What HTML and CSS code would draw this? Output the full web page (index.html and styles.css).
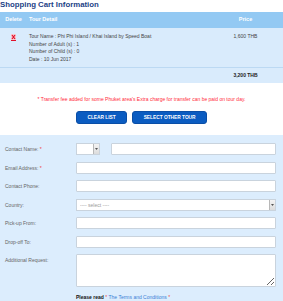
FILE: index.html
```html
<!DOCTYPE html>
<html lang="en">

<head>
    <meta charset="UTF-8">
    <meta name="viewport" content="width=device-width, initial-scale=1.0">
    <title>Shopping Cart</title>
    <link rel="stylesheet" href="styles.css">
</head>

<body>
    <h2 class="page-title">Shopping Cart Information</h2>

    <!-- Cart Table -->
    <table class="cart">
        <thead>
            <tr>
                <th class="col-del">Delete</th>
                <th class="col-detail">Tour Detail</th>
                <th class="col-price">Price</th>
            </tr>
        </thead>
        <tbody>
            <tr class="item">
                <td class="col-del">
                    <svg class="del-icon" width="5" height="7" viewBox="0 0 5 7">
                        <rect x="0" y="0" width="5" height="6" fill="#f6c9d0" />
                        <path d="M1 1 L4 5 M4 1 L1 5" stroke="#e0102a" stroke-width="1.2" />
                        <rect x="0" y="6" width="5" height="1" fill="#e0102a" />
                    </svg>
                </td>
                <td class="col-detail">
                    Tour Name : Phi Phi Island / Khai Island by Speed Boat<br>
                    Number of Adult (s) : 1<br>
                    Number of Child (s) : 0<br>
                    Date : 10 Jun 2017
                </td>
                <td class="col-price">1,600 THB</td>
            </tr>
            <tr class="total">
                <td></td>
                <td></td>
                <td class="col-price">3,200 THB</td>
            </tr>
        </tbody>
    </table>

    <p class="note">* Transfer fee added for some Phuket area's Extra charge for transfer can be paid on tour day.</p>

    <div class="actions">
        <button type="button" class="btn">CLEAR LIST</button>
        <button type="button" class="btn">SELECT OTHER TOUR</button>
    </div>

    <!-- Contact Form -->
    <form class="contact-form">
        <div class="form-row">
            <label>Contact Name: <span class="req">*</span></label>
            <div class="field-group">
                <div class="select-box small">
                    <select></select>
                    <span class="arrow"><svg width="3" height="2" viewBox="0 0 3 2"><path d="M0 0 H3 L1.5 2 Z" fill="#555" /></svg></span>
                </div>
                <input type="text" class="form-control">
            </div>
        </div>

        <div class="form-row">
            <label>Email Address: <span class="req">*</span></label>
            <input type="text" class="form-control">
        </div>

        <div class="form-row">
            <label>Contact Phone:</label>
            <input type="text" class="form-control">
        </div>

        <div class="form-row">
            <label>Country:</label>
            <div class="select-box wide">
                <select>
                    <option>---- select ----</option>
                </select>
                <span class="arrow"><svg width="3" height="2" viewBox="0 0 3 2"><path d="M0 0 H3 L1.5 2 Z" fill="#555" /></svg></span>
            </div>
        </div>

        <div class="form-row">
            <label>Pick-up From:</label>
            <input type="text" class="form-control">
        </div>

        <div class="form-row">
            <label>Drop-off To:</label>
            <input type="text" class="form-control">
        </div>

        <div class="form-row">
            <label>Additional Request:</label>
            <textarea class="form-control area"></textarea>
        </div>

        <p class="terms"><b>Please read</b> <span class="req">*</span> <a href="#">The Terms and Conditions</a> <span class="req">*</span></p>
    </form>
</body>

</html>
```

FILE: styles.css
```css
body {
    font-family: 'Liberation Sans', Arial, sans-serif;
    margin: 0;
    padding: 0;
    background-color: #fff;
}

.page-title {
    margin: 0 0 3px 0;
    font-size: 7.8px;
    line-height: 9px;
    font-weight: bold;
    color: #1c3f86;
}

.cart {
    width: 100%;
    border-collapse: collapse;
    font-size: 5px;
    line-height: 7.5px;
    color: #444;
}

.cart th {
    background-color: #93c9f3;
    color: #fff;
    font-weight: bold;
    font-size: 5.5px;
    height: 16px;
    padding: 0;
}

.cart td {
    padding: 0;
    vertical-align: top;
}

.col-del {
    width: 27px;
    text-align: center;
}

.col-detail {
    text-align: left;
    padding-left: 2px !important;
}

.col-price {
    width: 75px;
    text-align: center;
}

.item td {
    background-color: #d9ebfc;
    padding-top: 5px;
    padding-bottom: 4px;
    border-bottom: 1px solid #bcd9f3;
}

.del-icon {
    display: block;
    margin: 1px auto 0;
}

.total td {
    background-color: #d9ebfc;
    height: 15px;
    vertical-align: middle;
    font-weight: bold;
    color: #222;
}

.note {
    margin: 12.5px 0 0 0;
    font-size: 5px;
    line-height: 7px;
    text-align: center;
    color: #ff2b3b;
}

.actions {
    display: flex;
    justify-content: center;
    gap: 5px;
    margin-top: 8.5px;
}

.btn {
    background-color: #0b5cc1;
    color: #fff;
    border: 1px solid #0a4ea6;
    border-radius: 3px;
    height: 13px;
    padding: 0 10.5px;
    font-family: 'Liberation Sans', Arial, sans-serif;
    font-size: 4.8px;
    font-weight: bold;
    line-height: 11px;
    cursor: pointer;
}

.btn:hover {
    background-color: #094da3;
}

.contact-form {
    margin-top: 11px;
    background-color: #dcedfd;
    padding: 8px 7px 3px 5px;
    font-size: 5px;
    color: #666;
}

.form-row {
    display: flex;
    align-items: flex-start;
    margin-bottom: 6.5px;
}

.form-row label {
    width: 71px;
    flex-shrink: 0;
    line-height: 12px;
}

.req {
    color: #f03c3c;
}

.field-group {
    flex: 1;
    display: flex;
    gap: 11px;
}

.form-control {
    flex: 1;
    min-width: 0;
    height: 12px;
    margin: 0;
    padding: 0 3px;
    border: 1px solid #c9d3dd;
    border-radius: 1px;
    background-color: #fff;
    box-sizing: border-box;
    font-size: 5px;
}

.area {
    height: 33px;
    resize: vertical;
}

.select-box {
    display: flex;
    height: 12px;
    border: 1px solid #c9d3dd;
    background-color: #fff;
    box-sizing: border-box;
}

.select-box.small {
    width: 24px;
    flex-shrink: 0;
}

.select-box.wide {
    flex: 1;
}

.select-box select {
    flex: 1;
    min-width: 0;
    border: none;
    background: transparent;
    appearance: none;
    -webkit-appearance: none;
    padding: 0 3px;
    font-family: 'Liberation Sans', Arial, sans-serif;
    font-size: 5px;
    color: #999;
    outline: none;
}

.select-box .arrow {
    width: 5px;
    display: flex;
    align-items: center;
    justify-content: center;
    background: linear-gradient(#f4f4f4, #dcdcdc);
    border-left: 1px solid #b8b8b8;
}

.terms {
    margin: 0 0 0 71px;
    font-size: 5px;
    line-height: 7px;
    color: #111;
}

.terms a {
    color: #3a7fd6;
    text-decoration: none;
}
```
